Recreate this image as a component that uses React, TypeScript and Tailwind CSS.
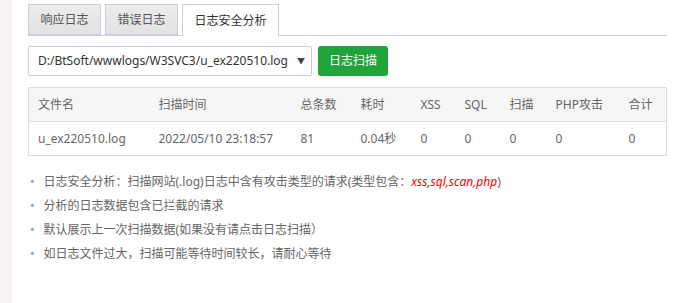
const tabs = ["响应日志", "错误日志", "日志安全分析"];

const cols = [
  { label: "文件名", w: "w-[121px]" },
  { label: "扫描时间", w: "w-[142px]" },
  { label: "总条数", w: "w-[60px]" },
  { label: "耗时", w: "w-[60px]" },
  { label: "XSS", w: "w-[44px]" },
  { label: "SQL", w: "w-[45px]" },
  { label: "扫描", w: "w-[46px]" },
  { label: "PHP攻击", w: "w-[73px]" },
  { label: "合计", w: "" },
];

const row = ["u_ex220510.log", "2022/05/10 23:18:57", "81", "0.04秒", "0", "0", "0", "0", "0"];

const notes = [
  "分析的日志数据包含已拦截的请求",
  "默认展示上一次扫描数据(如果没有请点击日志扫描）",
  "如日志文件过大，扫描可能等待时间较长，请耐心等待",
];

const App = () => (
  <div
    className="flex h-[303px] w-[683px] bg-white text-[12px] text-[#666]"
    style={{ fontFamily: '"Noto Sans", "Noto Sans CJK SC", sans-serif' }}
  >
    <div className="w-[12px] shrink-0 bg-[#f6f2f5]" />
    <div className="flex-1 pl-[16px] pr-[16px] pt-[4px]">
      {/* tabs */}
      <div className="flex h-[32px] gap-[4px] border-b border-[#ccccdd]">
        {tabs.map((t, i) =>
          i === 2 ? (
            <div
              key={t}
              className="-mb-px flex h-[32px] w-[97px] items-center justify-center border border-b-0 border-[#ccccdd] bg-white text-[#333]"
            >
              {t}
            </div>
          ) : (
            <div
              key={t}
              className="flex h-[31px] w-[73px] items-center justify-center border border-[#ccccdd] bg-gradient-to-b from-[#ececec] to-[#e2e2e4] text-[#555]"
            >
              {t}
            </div>
          )
        )}
      </div>

      {/* selector + scan button */}
      <div className="mt-[10px] flex items-center gap-[6px]">
        <div className="flex h-[30px] w-[284px] items-center justify-between rounded-[2px] border border-[#cccccc] bg-white pl-[9px] pr-[6px] text-[12px] text-[#333]">
          <span>D:/BtSoft/wwwlogs/W3SVC3/u_ex220510.log</span>
          <span className="text-[8px] text-[#444]">▼</span>
        </div>
        <button className="h-[30px] w-[70px] rounded-[3px] bg-[#20a53a] text-[12px] text-white">
          日志扫描
        </button>
      </div>

      {/* result table */}
      <table className="mt-[11px] w-full table-fixed border-collapse border border-[#dddddd]">
        <thead>
          <tr className="h-[34px] bg-[#f6f6f6]">
            {cols.map((c) => (
              <th key={c.label} className={`${c.w} pl-[9px] text-left font-normal`}>
                {c.label}
              </th>
            ))}
          </tr>
        </thead>
        <tbody>
          <tr className="h-[34px] border-t border-[#dddddd]">
            {row.map((v, i) => (
              <td key={i} className="pl-[9px]">
                {v}
              </td>
            ))}
          </tr>
        </tbody>
      </table>

      {/* notes */}
      <ul className="mt-[14px] pl-[2px]">
        <li className="flex h-[24px] items-center">
          <span className="mr-[9px] text-[#999]">•</span>
          <span>
            日志安全分析：扫描网站(.log)日志中含有攻击类型的请求(类型包含：
            <em className="text-[#ff0000]">xss,sql,scan,php</em>)
          </span>
        </li>
        {notes.map((n) => (
          <li key={n} className="flex h-[24px] items-center">
            <span className="mr-[9px] text-[#999]">•</span>
            <span>{n}</span>
          </li>
        ))}
      </ul>
    </div>
  </div>
);

export default App;
